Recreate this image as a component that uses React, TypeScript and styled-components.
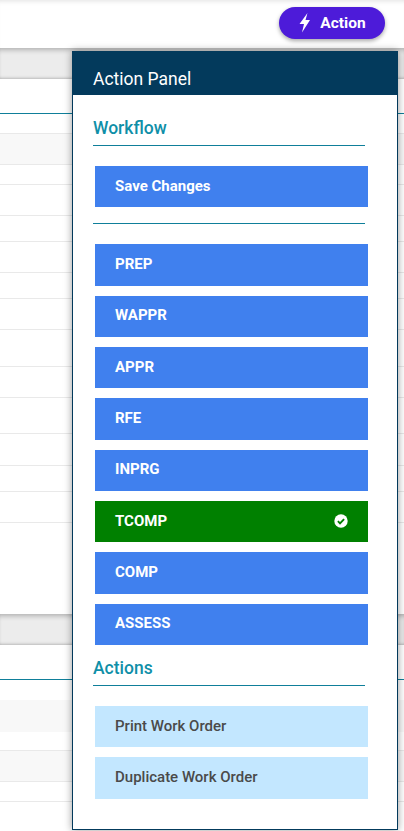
import React from "react";
import styled, { createGlobalStyle } from "styled-components";

const workflowSteps = ["PREP", "WAPPR", "APPR", "RFE", "INPRG", "TCOMP", "COMP", "ASSESS"];

const upperRows = [20, 31, 20, 31, 26, 31, 26, 31, 37, 31, 36, 32, 26, 31];
const lowerRows = [
  { height: 20, plain: true },
  { height: 32, striped: true, plain: true },
  { height: 19 },
  { height: 31, striped: true },
  { height: 20 },
];

const GlobalStyle = createGlobalStyle`
  html, body {
    margin: 0;
    padding: 0;
    background: #fff;
    font-family: Roboto, "Liberation Sans", sans-serif;
  }
  body {
    width: 404px;
    height: 831px;
    overflow: hidden;
  }
`;

const Page = styled.div`
  position: relative;
  width: 404px;
  height: 831px;
  overflow: hidden;
  background: #fff;
`;

const Toolbar = styled.header`
  display: flex;
  justify-content: flex-end;
  align-items: flex-start;
  height: 48px;
  box-sizing: border-box;
  padding: 7px 19px 0 0;
  background: #fff;
  box-shadow: inset 0 5px 5px -4px rgba(0, 0, 0, 0.12);
`;

const ActionButton = styled.button`
  display: flex;
  align-items: center;
  justify-content: center;
  gap: 9px;
  width: 106px;
  height: 32px;
  padding: 0 0 0 1px;
  border: 0;
  border-radius: 16px;
  background: #4d1bd9;
  color: #fff;
  font-family: inherit;
  font-size: 15.5px;
  font-weight: 700;
  box-shadow: 0 2px 4px rgba(0, 0, 0, 0.35);
`;

const GreyBand = styled.div`
  height: 31px;
  background: #ececec;
  box-shadow:
    inset 0 5px 5px -3px rgba(0, 0, 0, 0.25),
    inset 0 -3px 3px -2px rgba(0, 0, 0, 0.22);
`;

const Card = styled.section`
  height: 535px;
  background: #fff;
`;

const TableHead = styled.div<{ $height: number }>`
  height: ${(p) => p.$height}px;
  border-bottom: 1px solid #0f7f9a;
`;

const Row = styled.div<{ $height: number; $striped?: boolean; $plain?: boolean }>`
  height: ${(p) => p.$height}px;
  box-sizing: border-box;
  border-bottom: 1px solid ${(p) => (p.$plain ? "transparent" : "#e9e9e9")};
  background: ${(p) => (p.$striped ? "#f8f8f8" : "#fff")};
`;

const Panel = styled.aside`
  position: absolute;
  top: 51px;
  left: 72px;
  width: 326px;
  height: 779px;
  box-sizing: border-box;
  background: #fff;
  border: 1px solid #033a5c;
  box-shadow: 0 0 8px rgba(0, 0, 0, 0.4);
`;

const PanelTitle = styled.h2`
  margin: 0;
  height: 43px;
  box-sizing: border-box;
  padding: 17px 0 0 20px;
  background: #033a5c;
  color: #fff;
  font-size: 17.5px;
  line-height: 20px;
  font-weight: 400;
`;

const PanelBody = styled.div`
  padding: 20px 0 0 20px;
`;

const SectionTitle = styled.h3`
  margin: 0;
  width: 272px;
  height: 31px;
  box-sizing: border-box;
  border-bottom: 1px solid #0f7f9a;
  color: #0f8fa8;
  font-size: 17.5px;
  line-height: 26px;
  font-weight: 500;
`;

const ButtonStack = styled.div<{ $flush?: boolean }>`
  display: flex;
  flex-direction: column;
  gap: 10px;
  width: 273px;
  margin: ${(p) => (p.$flush ? 0 : "20px")} 0 0 2px;
`;

const PanelButton = styled.button<{ $tone?: "primary" | "active" | "light" }>`
  display: flex;
  align-items: center;
  justify-content: space-between;
  height: 41.33px;
  padding: 0 20px 2px;
  border: 0;
  background: ${(p) =>
    p.$tone === "active" ? "#008000" : p.$tone === "light" ? "#c3e7ff" : "#4080ee"};
  color: ${(p) => (p.$tone === "light" ? "#4a4a4a" : "#fff")};
  font-family: inherit;
  font-size: 15px;
  font-weight: ${(p) => (p.$tone === "light" ? 500 : 700)};
  text-align: left;
`;

const Divider = styled.hr`
  width: 272px;
  height: 1px;
  margin: 16px 0 20px;
  border: 0;
  background: #0f7f9a;
`;

const ActionsHeading = styled(SectionTitle)`
  margin-top: 10px;
`;

function BoltIcon() {
  return (
    <svg width="12" height="20" viewBox="0 0 12 20" aria-hidden="true">
      <path d="M8.5 0 .5 11H5L3 19.5 11 7H6.5z" fill="#fff" />
    </svg>
  );
}

function CheckBadge() {
  return (
    <svg width="14" height="14" viewBox="0 0 14 14" aria-hidden="true">
      <circle cx="7" cy="7" r="6.7" fill="#fff" />
      <path d="M3.9 7.2 6 9.3l4.1-4.2" fill="none" stroke="#008000" strokeWidth="1.9" />
    </svg>
  );
}

export default function App() {
  return (
    <Page>
      <GlobalStyle />
      <Toolbar>
        <ActionButton>
          <BoltIcon />
          Action
        </ActionButton>
      </Toolbar>
      <GreyBand />
      <Card>
        <TableHead $height={34} />
        {upperRows.map((height, i) => (
          <Row key={i} $height={height} $striped={i === 1} />
        ))}
      </Card>
      <GreyBand />
      <TableHead $height={34} />
      {lowerRows.map((row, i) => (
        <Row key={i} $height={row.height} $striped={row.striped} $plain={row.plain} />
      ))}
      <Panel>
        <PanelTitle>Action Panel</PanelTitle>
        <PanelBody>
          <SectionTitle>Workflow</SectionTitle>
          <ButtonStack>
            <PanelButton>Save Changes</PanelButton>
          </ButtonStack>
          <Divider />
          <ButtonStack $flush>
            {workflowSteps.map((step) => (
              <PanelButton key={step} $tone={step === "TCOMP" ? "active" : "primary"}>
                {step}
                {step === "TCOMP" && <CheckBadge />}
              </PanelButton>
            ))}
          </ButtonStack>
          <ActionsHeading>Actions</ActionsHeading>
          <ButtonStack>
            <PanelButton $tone="light">Print Work Order</PanelButton>
            <PanelButton $tone="light">Duplicate Work Order</PanelButton>
          </ButtonStack>
        </PanelBody>
      </Panel>
    </Page>
  );
}
